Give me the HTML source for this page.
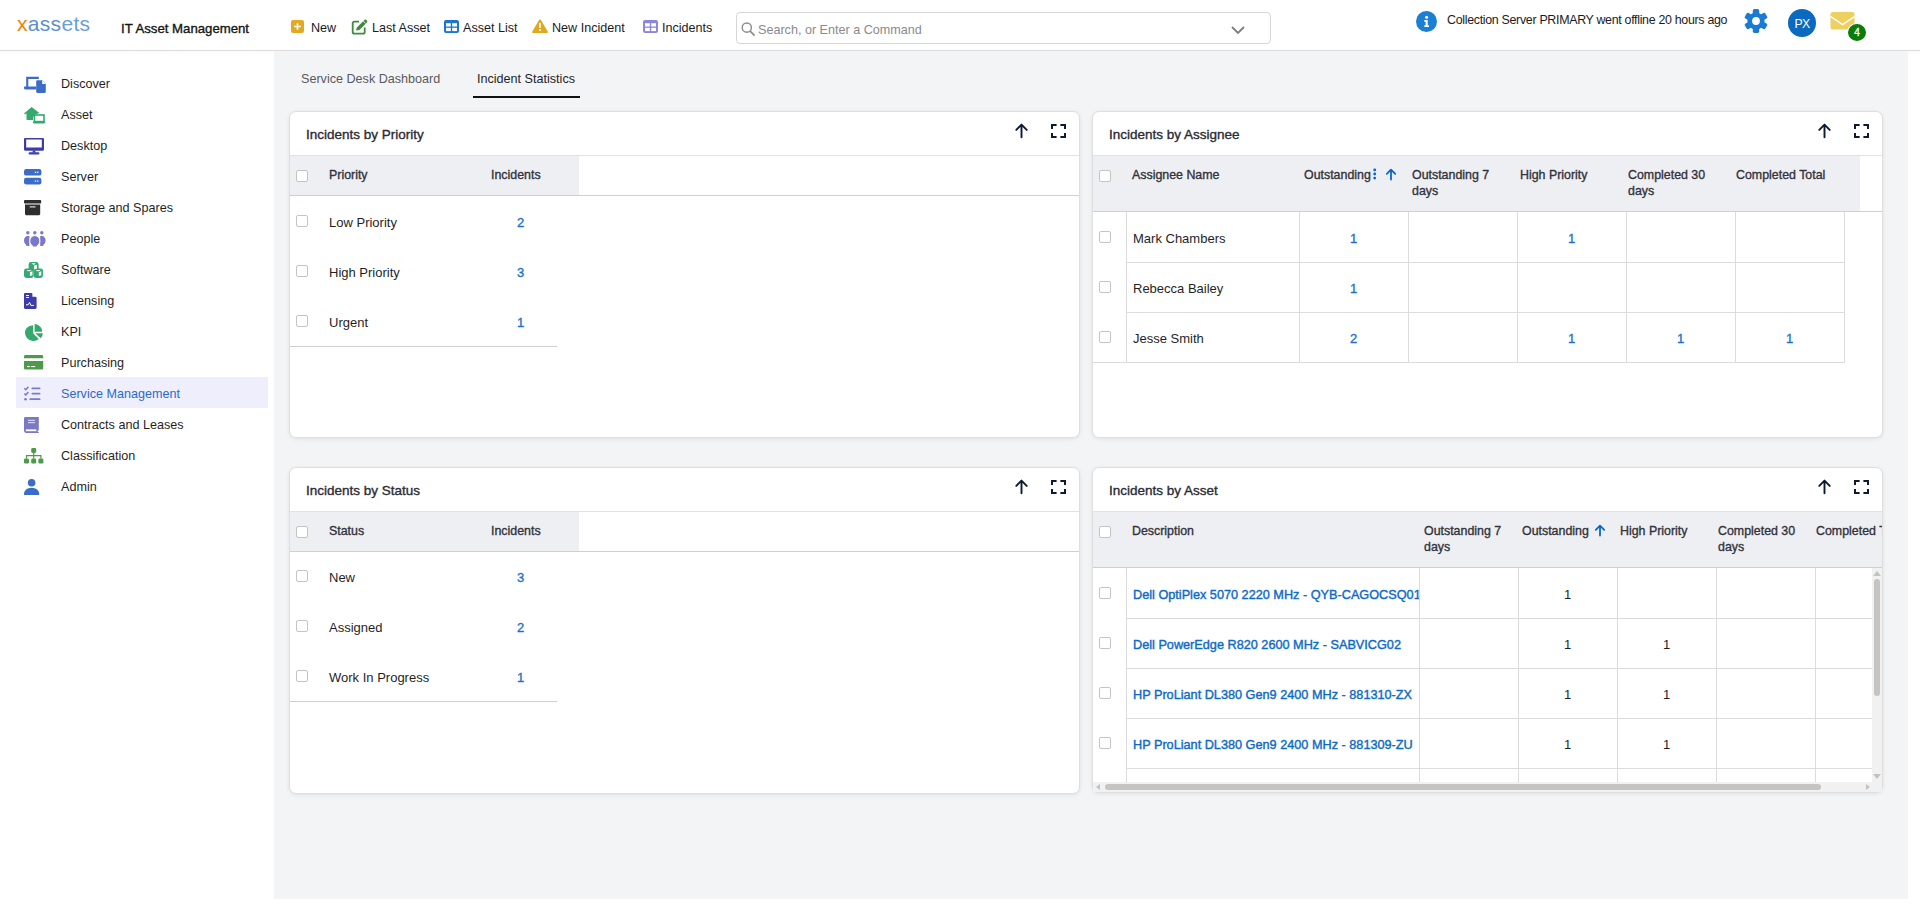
<!DOCTYPE html>
<html><head><meta charset="utf-8">
<style>
*{box-sizing:border-box;margin:0;padding:0}
html,body{width:1920px;height:911px;overflow:hidden;background:#fff;font-family:"Liberation Sans",sans-serif;color:#1f1f1f}
.a{position:absolute}
#hdr{position:absolute;left:0;top:0;width:1920px;height:50px;background:#fff}
#hline{position:absolute;left:0;top:50px;width:1920px;height:1px;background:#dedcdb;box-shadow:0 1px 3px rgba(0,0,0,0.06)}
.logo{position:absolute;left:17px;top:12px;font-size:21px;letter-spacing:0.3px;font-weight:400}
.tb{position:absolute;top:21px;font-size:12.6px;color:#1b1b1b;white-space:nowrap}
.tbi{position:absolute}
#main{position:absolute;left:274px;top:51px;width:1634px;height:848px;background:#f3f4f6}
.nav{position:absolute;left:61px;font-size:12.6px;color:#1f1f1f;white-space:nowrap}
.ico{position:absolute;left:24px}
.panel{position:absolute;background:#fff;border-radius:7px;border:1px solid #dedede;box-shadow:0 1px 4px rgba(0,0,0,0.08)}
.ptitle{position:absolute;left:16px;top:14px;font-size:13.5px;color:#2b2b33;white-space:nowrap;-webkit-text-stroke:0.35px #2b2b33}
.psep{position:absolute;left:0;top:43px;height:1px;background:#e3e3e3;width:100%}
.thbg{position:absolute;left:0;top:44px;background:#eeeff3}
.thline{position:absolute;left:0;height:2px;background:#d9d9d9;width:100%}
.cb{position:absolute;width:12px;height:12px;border:1px solid #c4c4c4;border-radius:2px;background:#fff}
.th{position:absolute;font-size:12.4px;color:#33333b;white-space:nowrap;font-weight:400;-webkit-text-stroke:0.35px #33333b}
.td{position:absolute;font-size:13px;color:#1f1f1f;white-space:nowrap}
.num{position:absolute;font-size:13px;color:#1a73c8;white-space:nowrap;-webkit-text-stroke:0.35px #1a73c8}
.ln{position:absolute;background:#dcdcdc}
.link{position:absolute;font-size:12.7px;color:#0d6ac6;white-space:nowrap;font-weight:400;-webkit-text-stroke:0.4px #0d6ac6}
</style></head><body>
<div id="hdr">
  <div class="logo"><span style="color:#f07f0a">x</span><span style="color:#5a90cc">ass</span><span style="color:#6a9ddc">ets</span></div>
  <div class="tb" style="left:121px;top:21px;font-size:13.2px;font-weight:400;color:#141414;-webkit-text-stroke:0.35px #141414">IT Asset Management</div>

  <div class="tbi" style="left:291px;top:20px;width:13px;height:13px;background:#e2aa22;border-radius:2px"><svg width="13" height="13" viewBox="0 0 13 13" style="position:absolute;left:0;top:0"><path d="M6.5 3.2v6.6M3.2 6.5h6.6" stroke="#fff" stroke-width="1.6"/></svg></div>
  <div class="tb" style="left:311px">New</div>
  <svg class="tbi" style="left:351px;top:18px" width="18" height="17" viewBox="0 0 18 17"><path d="M8 3.7H3.4c-1 0-1.7.7-1.7 1.7v8.6c0 1 .7 1.7 1.7 1.7H12c1 0 1.7-.7 1.7-1.7V9.6" fill="none" stroke="#3f8a3f" stroke-width="1.8"/><path d="M5 12.6l.9-3.2 7.5-7.5c.5-.5 1.3-.5 1.8 0l.7.7c.5.5.5 1.3 0 1.8l-7.5 7.5z" fill="#3f8a3f"/><path d="M12.3 3.1l2.4 2.4" stroke="#fff" stroke-width="0.8"/></svg>
  <div class="tb" style="left:372px">Last Asset</div>
  <svg class="tbi" style="left:444px;top:20px" width="15" height="13" viewBox="0 0 15 13"><rect x="0" y="0" width="15" height="13" rx="2" fill="#1d74d4"/><rect x="2" y="3.2" width="4.8" height="3.3" fill="#fff"/><rect x="8.2" y="3.2" width="4.8" height="3.3" fill="#fff"/><rect x="2" y="7.8" width="4.8" height="3.3" fill="#fff"/><rect x="8.2" y="7.8" width="4.8" height="3.3" fill="#fff"/></svg>
  <div class="tb" style="left:463px">Asset List</div>
  <svg class="tbi" style="left:532px;top:19px" width="16" height="14" viewBox="0 0 16 14"><path d="M8 0.6c.5 0 .9.3 1.1.7l6.6 11.2c.4.7-.1 1.5-.9 1.5H1.2c-.8 0-1.3-.8-.9-1.5L6.9 1.3C7.1.9 7.5.6 8 .6z" fill="#e0a91c"/><rect x="7.1" y="4" width="1.8" height="5" fill="#fff"/><rect x="7.1" y="10.2" width="1.8" height="1.8" fill="#fff"/></svg>
  <div class="tb" style="left:552px">New Incident</div>
  <svg class="tbi" style="left:643px;top:20px" width="15" height="13" viewBox="0 0 15 13"><rect x="0" y="0" width="15" height="13" rx="2" fill="#8d87d8"/><rect x="2" y="3.2" width="4.8" height="3.3" fill="#fff"/><rect x="8.2" y="3.2" width="4.8" height="3.3" fill="#fff"/><rect x="2" y="7.8" width="4.8" height="3.3" fill="#fff"/><rect x="8.2" y="7.8" width="4.8" height="3.3" fill="#fff"/></svg>
  <div class="tb" style="left:662px">Incidents</div>
  <div class="a" style="left:736px;top:12px;width:535px;height:32px;border:1px solid #d6d6d6;border-radius:4px;background:#fff"></div>
  <svg class="tbi" style="left:741px;top:22px" width="15" height="15" viewBox="0 0 15 15"><circle cx="5.8" cy="5.6" r="4.6" fill="none" stroke="#8a8a8a" stroke-width="1.4"/><path d="M9.2 9.2l4.4 4.4" stroke="#8a8a8a" stroke-width="1.7"/></svg>
  <div class="tb" style="left:758px;top:23px;color:#8a8a8a">Search, or Enter a Command</div>
  <svg class="tbi" style="left:1231px;top:26px" width="14" height="9" viewBox="0 0 14 9"><path d="M1 1l6 6 6-6" fill="none" stroke="#7d7d7d" stroke-width="1.8"/></svg>
  <svg class="tbi" style="left:1416px;top:11px" width="21" height="21" viewBox="0 0 21 21"><circle cx="10.5" cy="10.5" r="10.5" fill="#1b7fd4"/><circle cx="10.6" cy="6.2" r="1.5" fill="#fff"/><path d="M8.3 9h3.4v5.2h1.2v1.7H8.3v-1.7h1.3v-3.5H8.3z" fill="#fff"/></svg>
  <div class="tb" style="left:1447px;top:13px;font-size:12.4px;letter-spacing:-0.3px;color:#1b1b1b">Collection Server PRIMARY went offline 20 hours ago</div>
  <svg class="tbi" style="left:1744px;top:9px" width="24" height="24" viewBox="-12 -12 24 24"><g fill="#1a7ad4"><circle r="8.6"/><rect x="-3.2" y="-11.9" width="6.4" height="23.8" rx="1.6"/><rect x="-3.2" y="-11.9" width="6.4" height="23.8" rx="1.6" transform="rotate(60)"/><rect x="-3.2" y="-11.9" width="6.4" height="23.8" rx="1.6" transform="rotate(120)"/></g><circle r="3.9" fill="#fff"/></svg>
  <div class="a" style="left:1788px;top:9px;width:28px;height:28px;border-radius:50%;background:#0a6abf;color:#fff;font-size:12.2px;line-height:31px;text-align:center;letter-spacing:-0.6px">PX</div>
  <svg class="tbi" style="left:1830px;top:12px" width="25" height="18" viewBox="0 0 25 18"><rect x="0.5" y="0" width="24" height="17.6" rx="2.2" fill="#edd060"/><path d="M0.8 4.6l11.8 8 11.8-8" fill="none" stroke="#fff" stroke-width="1.3"/></svg>
  <div class="a" style="left:1847px;top:23px;width:20px;height:19px;border-radius:50%;background:#0b7d0b;border:1px solid #fff;color:#fff;font-size:10px;line-height:18px;text-align:center;-webkit-text-stroke:0.3px #fff">4</div>
</div>
<div id="hline"></div>
<div class="a" style="left:16px;top:377px;width:252px;height:31px;background:#eeeefc"></div>
<div class="nav" style="top:77px;color:#1f1f1f">Discover</div>
<svg class="ico" style="left:24px;top:76px" width="22" height="17" viewBox="0 0 22 17"><path d="M2.2 0.8h12.6v2.2H4.3v9.2H2.2z" fill="#3a6cc8"/><path d="M0 11.2c0-.4.3-.6.6-.6h11.4v2.8H1.2C.5 13.4 0 12.8 0 12.1z" fill="#3a6cc8"/><path d="M12.2 5.5c0-.7.5-1.2 1.2-1.2h4.8l3.6 3.6v7.8c0 .7-.5 1.2-1.2 1.2h-7.2c-.7 0-1.2-.5-1.2-1.2z" fill="#3a6cc8"/><path d="M18.2 4.3v3.6h3.6" fill="#fff"/></svg>
<div class="nav" style="top:108px;color:#1f1f1f">Asset</div>
<svg class="ico" style="left:24px;top:107px" width="22" height="17" viewBox="0 0 22 17"><path d="M7.6 0L0 6.6l.9 1 1.6-1.3V12c0 .6.4 1 1 1H9V9.5h2.2V7.5L15.4 6 7.6 0z" fill="#35a86e"/><rect x="10.4" y="8" width="9.6" height="6.6" fill="none" stroke="#35a86e" stroke-width="1.6"/><path d="M8.8 14.6h12.6c0 1.2-.6 1.9-1.5 1.9H10.3c-.9 0-1.5-.7-1.5-1.9z" fill="#35a86e"/></svg>
<div class="nav" style="top:139px;color:#1f1f1f">Desktop</div>
<svg class="ico" style="left:24px;top:138px" width="20" height="17" viewBox="0 0 20 17"><path d="M1.2 0h17.6c.7 0 1.2.5 1.2 1.2v10.4c0 .7-.5 1.2-1.2 1.2H1.2C.5 12.8 0 12.3 0 11.6V1.2C0 .5.5 0 1.2 0z M2.2 1.6v7.8h15.6V1.6z" fill="#3d3ca8" fill-rule="evenodd"/><rect x="8.6" y="12.6" width="2.8" height="2" fill="#3d3ca8"/><rect x="4.6" y="14.3" width="10.8" height="2.2" rx="1" fill="#3d3ca8"/></svg>
<div class="nav" style="top:170px;color:#1f1f1f">Server</div>
<svg class="ico" style="left:24px;top:169px" width="18" height="16" viewBox="0 0 18 16"><rect x="0" y="0" width="17.4" height="6.6" rx="2.2" fill="#3a6cc8"/><rect x="0" y="8.8" width="17.4" height="6.6" rx="2.2" fill="#3a6cc8"/><rect x="10.8" y="2.7" width="1.4" height="1.2" fill="#fff"/><rect x="13" y="2.7" width="1.4" height="1.2" fill="#fff"/><rect x="10.8" y="11.5" width="1.4" height="1.2" fill="#fff"/><rect x="13" y="11.5" width="1.4" height="1.2" fill="#fff"/></svg>
<div class="nav" style="top:201px;color:#1f1f1f">Storage and Spares</div>
<svg class="ico" style="left:24px;top:200px" width="18" height="16" viewBox="0 0 18 16"><rect x="0" y="0" width="17.2" height="3.4" rx="1" fill="#2e2e2e"/><path d="M1 4.6h15.2v9.2c0 .9-.7 1.5-1.5 1.5H2.5c-.9 0-1.5-.6-1.5-1.5z" fill="#2e2e2e"/><rect x="5.6" y="6.2" width="6" height="1.4" rx=".6" fill="#d8d8d8"/></svg>
<div class="nav" style="top:232px;color:#1f1f1f">People</div>
<svg class="ico" style="left:24px;top:231px" width="22" height="16" viewBox="0 0 22 16"><g fill="#7b78c8"><circle cx="3.8" cy="1.8" r="1.7"/><circle cx="10.8" cy="1.8" r="1.7"/><circle cx="17.8" cy="1.8" r="1.7"/><path d="M3.8 5C1.6 5 0 7 0 9.6c0 2.2 1.2 3.8 2.4 4.6v.9h3V5.1z"/><path d="M17.8 5c2.2 0 3.8 2 3.8 4.6 0 2.2-1.2 3.8-2.4 4.6v.9h-3V5.1z"/><path d="M10.8 4.6c2.9 0 5 2.4 5 5.3 0 2.4-1.3 4.2-2.8 5v1.1H8.6v-1.1c-1.5-.8-2.8-2.6-2.8-5 0-2.9 2.1-5.3 5-5.3z" stroke="#fff" stroke-width="1"/></g></svg>
<div class="nav" style="top:263px;color:#1f1f1f">Software</div>
<svg class="ico" style="left:24px;top:262px" width="20" height="16" viewBox="0 0 20 16"><g fill="#35a874"><rect x="4.6" y="0" width="10" height="8.6" rx="2.4"/><rect x="0" y="6.4" width="9.6" height="9.6" rx="2.4"/><rect x="9.6" y="6.4" width="9.4" height="9.6" rx="2.4"/></g><g fill="#fff"><path d="M7.5 1.3h4.3L9.65 2.9z"/><path d="M10.1 3.6l2.8-.9v4l-2.8 .9z"/><ellipse cx="5" cy="8.6" rx="2.3" ry="0.65"/><path d="M5.9 10.2l2.5-.9v3.9l-2.5.9z"/><ellipse cx="14.1" cy="8.6" rx="2.3" ry="0.65"/><path d="M14.8 10.2l2.5-.9v3.9l-2.5.9z"/></g></svg>
<div class="nav" style="top:294px;color:#1f1f1f">Licensing</div>
<svg class="ico" style="left:24px;top:293px" width="13" height="16" viewBox="0 0 13 16"><path d="M1.2 0h6.8L12.6 4.4v10.4c0 .7-.5 1.2-1.2 1.2H1.2C.5 16 0 15.5 0 14.8V1.2C0 .5.5 0 1.2 0z" fill="#3d3ca8"/><path d="M8.4 0v3.8h4.2" fill="#fff"/><rect x="2" y="2" width="3" height="1" fill="#fff"/><rect x="2" y="4" width="3" height="1" fill="#fff"/><path d="M2 11.8h2.2l1.3-2.4 1.4 3h3" fill="none" stroke="#fff" stroke-width="1"/></svg>
<div class="nav" style="top:325px;color:#1f1f1f">KPI</div>
<svg class="ico" style="left:25px;top:324px" width="18" height="17" viewBox="0 0 18 17"><path d="M8.2 1.2v8.2l5.6 5.6c-1.4 1.2-3.3 1.9-5.3 1.9C3.8 16.9 0 13.1 0 8.5 0 4.5 3.6 1.4 8.2 1.2z" fill="#35a86e"/><path d="M9.6 0v7.8h7.6C17.2 3.6 13.8.2 9.6 0z" fill="#35a86e"/><path d="M10.4 9.2h7.4c-.1 2-.9 3.8-2.2 5.1z" fill="#35a86e"/></svg>
<div class="nav" style="top:356px;color:#1f1f1f">Purchasing</div>
<svg class="ico" style="left:24px;top:355px" width="20" height="15" viewBox="0 0 20 15"><path d="M1.6 0h16c.9 0 1.6.7 1.6 1.6v1.7H0V1.6C0 .7.7 0 1.6 0z" fill="#4e9a4a"/><path d="M0 5.9h19.2v7.1c0 .9-.7 1.6-1.6 1.6h-16C.7 14.6 0 13.9 0 13z" fill="#4e9a4a"/><rect x="3" y="11" width="2.8" height="1.1" fill="#fff"/><rect x="7.2" y="11" width="4" height="1.1" fill="#fff"/></svg>
<div class="nav" style="top:387px;color:#2f6acb">Service Management</div>
<svg class="ico" style="left:24px;top:386px" width="17" height="15" viewBox="0 0 17 15"><path d="M0.4 2.4l1.4 1.3 2.6-3" fill="none" stroke="#7b78d0" stroke-width="1.5"/><path d="M0.4 7.6l1.4 1.3 2.6-3" fill="none" stroke="#7b78d0" stroke-width="1.5"/><circle cx="1.5" cy="13.2" r="1.3" fill="#7b78d0"/><rect x="7.5" y="1.5" width="9" height="1.8" rx=".9" fill="#7b78d0"/><rect x="7.5" y="6.7" width="9" height="1.8" rx=".9" fill="#7b78d0"/><rect x="5.4" y="12.3" width="11.1" height="1.8" rx=".9" fill="#7b78d0"/></svg>
<div class="nav" style="top:418px;color:#1f1f1f">Contracts and Leases</div>
<svg class="ico" style="left:24px;top:417px" width="15" height="16" viewBox="0 0 15 16"><path d="M1.4 0h13.4v13.4h-1v1.6h1V16H2.2C1 16 0 15 0 13.8V1.4C0 .6.6 0 1.4 0z" fill="#7b78c8"/><rect x="1.8" y="12.4" width="10.6" height="1.8" fill="#fff"/><rect x="4" y="2.8" width="7" height="1.2" fill="#d6d5f0"/><rect x="4" y="5" width="7" height="1.2" fill="#d6d5f0"/></svg>
<div class="nav" style="top:449px;color:#1f1f1f">Classification</div>
<svg class="ico" style="left:24px;top:448px" width="20" height="16" viewBox="0 0 20 16"><rect x="7.2" y="0" width="5" height="5" rx="1.4" fill="#4e9a4a"/><rect x="0" y="10.6" width="5" height="5" rx="1.4" fill="#4e9a4a"/><rect x="7.2" y="10.6" width="5" height="5" rx="1.4" fill="#4e9a4a"/><rect x="14.4" y="10.6" width="5" height="5" rx="1.4" fill="#4e9a4a"/><path d="M9.7 5v5.6 M2.5 10.6V7.6h14.4v3" fill="none" stroke="#4e9a4a" stroke-width="1.2"/></svg>
<div class="nav" style="top:480px;color:#1f1f1f">Admin</div>
<svg class="ico" style="left:24px;top:479px" width="16" height="16" viewBox="0 0 16 16"><circle cx="7.6" cy="3.8" r="3.8" fill="#3a6cc8"/><path d="M7.6 8.8c4.4 0 7.6 2.8 7.6 6.2v1H0v-1C0 11.6 3.2 8.8 7.6 8.8z" fill="#3a6cc8"/></svg>
<div id="main"></div>
<!--PANELS-->
<div class="a" style="left:301px;top:72px;font-size:12.6px;color:#5a5a5a;white-space:nowrap">Service Desk Dashboard</div>
<div class="a" style="left:477px;top:72px;font-size:12.6px;color:#1f1f1f;white-space:nowrap">Incident Statistics</div>
<div class="a" style="left:473px;top:96px;width:107px;height:2px;background:#111"></div>
<div class="panel" style="left:289px;top:111px;width:791px;height:327px"></div>
<div class="ptitle" style="left:306px;top:127px">Incidents by Priority</div>
<svg class="a" style="left:1014px;top:123px" width="14" height="16" viewBox="0 0 14 16"><path d="M7.5 14.2V1.6M2.3 6.9L7.5 1.6 12.7 6.9" fill="none" stroke="#0d1a30" stroke-width="1.9" stroke-linecap="round" stroke-linejoin="round"/></svg>
<svg class="a" style="left:1051px;top:124px" width="15" height="14" viewBox="0 0 15 14"><path d="M1 5V1h4.6M9.4 1H14v4M14 9v4H9.4M5.6 13H1V9" fill="none" stroke="#0d1a30" stroke-width="2"/></svg>
<div class="ln" style="left:290px;top:155px;width:789px;height:1px;background:#e2e2e2"></div>
<div class="a" style="left:290px;top:156px;width:289px;height:39px;background:#eeeff3"></div>
<div class="ln" style="left:290px;top:195px;width:789px;height:1px;background:#cfcfcf"></div>
<div class="cb" style="left:296px;top:170px"></div>
<div class="th" style="left:329px;top:168px">Priority</div>
<div class="th" style="left:491px;top:168px">Incidents</div>
<div class="cb" style="left:296px;top:215px"></div>
<div class="td" style="left:329px;top:215px">Low Priority</div>
<div class="num" style="left:517px;top:215px">2</div>
<div class="cb" style="left:296px;top:265px"></div>
<div class="td" style="left:329px;top:265px">High Priority</div>
<div class="num" style="left:517px;top:265px">3</div>
<div class="cb" style="left:296px;top:315px"></div>
<div class="td" style="left:329px;top:315px">Urgent</div>
<div class="num" style="left:517px;top:315px">1</div>
<div class="ln" style="left:290px;top:346px;width:267px;height:1px;background:#cfcfcf"></div>
<div class="panel" style="left:289px;top:467px;width:791px;height:327px"></div>
<div class="ptitle" style="left:306px;top:483px">Incidents by Status</div>
<svg class="a" style="left:1014px;top:479px" width="14" height="16" viewBox="0 0 14 16"><path d="M7.5 14.2V1.6M2.3 6.9L7.5 1.6 12.7 6.9" fill="none" stroke="#0d1a30" stroke-width="1.9" stroke-linecap="round" stroke-linejoin="round"/></svg>
<svg class="a" style="left:1051px;top:480px" width="15" height="14" viewBox="0 0 15 14"><path d="M1 5V1h4.6M9.4 1H14v4M14 9v4H9.4M5.6 13H1V9" fill="none" stroke="#0d1a30" stroke-width="2"/></svg>
<div class="ln" style="left:290px;top:511px;width:789px;height:1px;background:#e2e2e2"></div>
<div class="a" style="left:290px;top:512px;width:289px;height:39px;background:#eeeff3"></div>
<div class="ln" style="left:290px;top:551px;width:789px;height:1px;background:#cfcfcf"></div>
<div class="cb" style="left:296px;top:526px"></div>
<div class="th" style="left:329px;top:524px">Status</div>
<div class="th" style="left:491px;top:524px">Incidents</div>
<div class="cb" style="left:296px;top:570px"></div>
<div class="td" style="left:329px;top:570px">New</div>
<div class="num" style="left:517px;top:570px">3</div>
<div class="cb" style="left:296px;top:620px"></div>
<div class="td" style="left:329px;top:620px">Assigned</div>
<div class="num" style="left:517px;top:620px">2</div>
<div class="cb" style="left:296px;top:670px"></div>
<div class="td" style="left:329px;top:670px">Work In Progress</div>
<div class="num" style="left:517px;top:670px">1</div>
<div class="ln" style="left:290px;top:701px;width:267px;height:1px;background:#cfcfcf"></div>
<div class="panel" style="left:1092px;top:111px;width:791px;height:327px"></div>
<div class="ptitle" style="left:1109px;top:127px">Incidents by Assignee</div>
<svg class="a" style="left:1817px;top:123px" width="14" height="16" viewBox="0 0 14 16"><path d="M7.5 14.2V1.6M2.3 6.9L7.5 1.6 12.7 6.9" fill="none" stroke="#0d1a30" stroke-width="1.9" stroke-linecap="round" stroke-linejoin="round"/></svg>
<svg class="a" style="left:1854px;top:124px" width="15" height="14" viewBox="0 0 15 14"><path d="M1 5V1h4.6M9.4 1H14v4M14 9v4H9.4M5.6 13H1V9" fill="none" stroke="#0d1a30" stroke-width="2"/></svg>
<div class="ln" style="left:1093px;top:155px;width:789px;height:1px;background:#e2e2e2"></div>
<div class="a" style="left:1093px;top:156px;width:767px;height:55px;background:#eeeff3"></div>
<div class="ln" style="left:1093px;top:211px;width:789px;height:1px;background:#cfcfcf"></div>
<div class="cb" style="left:1099px;top:170px"></div>
<div class="th" style="left:1132px;top:167px;line-height:16px">Assignee Name</div>
<div class="th" style="left:1304px;top:167px;line-height:16px">Outstanding</div>
<div class="th" style="left:1412px;top:167px;line-height:16px">Outstanding 7<br>days</div>
<div class="th" style="left:1520px;top:167px;line-height:16px">High Priority</div>
<div class="th" style="left:1628px;top:167px;line-height:16px">Completed 30<br>days</div>
<div class="th" style="left:1736px;top:167px;line-height:16px">Completed Total</div>
<svg class="a" style="left:1372px;top:168px" width="6" height="12" viewBox="0 0 6 12"><g fill="#0a66cc"><circle cx="2.7" cy="1.9" r="1.45"/><circle cx="2.7" cy="6" r="1.45"/><circle cx="2.7" cy="10.1" r="1.45"/></g></svg>
<svg class="a" style="left:1385px;top:168px" width="12" height="13" viewBox="0 0 12 13"><path d="M6 11.6V1.6M1.8 5.8L6 1.6 10.2 5.8" fill="none" stroke="#0a66cc" stroke-width="1.8" stroke-linecap="round" stroke-linejoin="round"/></svg>
<div class="ln" style="left:1126px;top:212px;width:1px;height:150px"></div>
<div class="ln" style="left:1299px;top:212px;width:1px;height:150px"></div>
<div class="ln" style="left:1408px;top:212px;width:1px;height:150px"></div>
<div class="ln" style="left:1517px;top:212px;width:1px;height:150px"></div>
<div class="ln" style="left:1626px;top:212px;width:1px;height:150px"></div>
<div class="ln" style="left:1735px;top:212px;width:1px;height:150px"></div>
<div class="ln" style="left:1844px;top:212px;width:1px;height:150px"></div>
<div class="ln" style="left:1126px;top:262px;width:719px;height:1px"></div>
<div class="ln" style="left:1126px;top:312px;width:719px;height:1px"></div>
<div class="ln" style="left:1093px;top:362px;width:752px;height:1px"></div>
<div class="cb" style="left:1099px;top:231px"></div>
<div class="td" style="left:1133px;top:231px">Mark Chambers</div>
<div class="num" style="left:1299px;width:109px;text-align:center;top:231px">1</div>
<div class="num" style="left:1517px;width:109px;text-align:center;top:231px">1</div>
<div class="cb" style="left:1099px;top:281px"></div>
<div class="td" style="left:1133px;top:281px">Rebecca Bailey</div>
<div class="num" style="left:1299px;width:109px;text-align:center;top:281px">1</div>
<div class="cb" style="left:1099px;top:331px"></div>
<div class="td" style="left:1133px;top:331px">Jesse Smith</div>
<div class="num" style="left:1299px;width:109px;text-align:center;top:331px">2</div>
<div class="num" style="left:1517px;width:109px;text-align:center;top:331px">1</div>
<div class="num" style="left:1626px;width:109px;text-align:center;top:331px">1</div>
<div class="num" style="left:1735px;width:109px;text-align:center;top:331px">1</div>
<div class="panel" style="left:1092px;top:467px;width:791px;height:326px"></div>
<div class="ptitle" style="left:1109px;top:483px">Incidents by Asset</div>
<svg class="a" style="left:1817px;top:479px" width="14" height="16" viewBox="0 0 14 16"><path d="M7.5 14.2V1.6M2.3 6.9L7.5 1.6 12.7 6.9" fill="none" stroke="#0d1a30" stroke-width="1.9" stroke-linecap="round" stroke-linejoin="round"/></svg>
<svg class="a" style="left:1854px;top:480px" width="15" height="14" viewBox="0 0 15 14"><path d="M1 5V1h4.6M9.4 1H14v4M14 9v4H9.4M5.6 13H1V9" fill="none" stroke="#0d1a30" stroke-width="2"/></svg>
<div class="ln" style="left:1093px;top:511px;width:789px;height:1px;background:#e2e2e2"></div>
<div class="a" style="left:1093px;top:512px;width:789px;height:55px;background:#eeeff3;overflow:hidden"><div class="th" style="left:723px;top:11px;line-height:16px">Completed Total</div></div>
<div class="ln" style="left:1093px;top:567px;width:789px;height:1px;background:#cfcfcf"></div>
<div class="cb" style="left:1099px;top:526px"></div>
<div class="th" style="left:1132px;top:523px;line-height:16px">Description</div>
<div class="th" style="left:1424px;top:523px;line-height:16px">Outstanding 7<br>days</div>
<div class="th" style="left:1522px;top:523px;line-height:16px">Outstanding</div>
<div class="th" style="left:1620px;top:523px;line-height:16px">High Priority</div>
<div class="th" style="left:1718px;top:523px;line-height:16px">Completed 30<br>days</div>
<svg class="a" style="left:1594px;top:524px" width="12" height="13" viewBox="0 0 12 13"><path d="M6 11.6V1.6M1.8 5.8L6 1.6 10.2 5.8" fill="none" stroke="#0a66cc" stroke-width="1.8" stroke-linecap="round" stroke-linejoin="round"/></svg>
<div class="a" style="left:1093px;top:568px;width:779px;height:214px;overflow:hidden;background:#fff"><div class="ln" style="left:33px;top:0px;width:1px;height:220px"></div><div class="ln" style="left:326px;top:0px;width:1px;height:220px"></div><div class="ln" style="left:425px;top:0px;width:1px;height:220px"></div><div class="ln" style="left:524px;top:0px;width:1px;height:220px"></div><div class="ln" style="left:623px;top:0px;width:1px;height:220px"></div><div class="ln" style="left:722px;top:0px;width:1px;height:220px"></div><div class="ln" style="left:33px;top:50px;width:760px;height:1px"></div><div class="ln" style="left:33px;top:100px;width:760px;height:1px"></div><div class="ln" style="left:33px;top:150px;width:760px;height:1px"></div><div class="ln" style="left:33px;top:200px;width:760px;height:1px"></div><div class="cb" style="left:6px;top:19px"></div><div class="a" style="left:33px;top:0px;width:293px;height:50px;overflow:hidden"><div class="link" style="left:7px;top:20px">Dell OptiPlex 5070 2220 MHz - QYB-CAGOCSQ01</div></div><div class="td" style="left:425px;width:99px;text-align:center;top:19px">1</div><div class="cb" style="left:6px;top:69px"></div><div class="a" style="left:33px;top:50px;width:293px;height:50px;overflow:hidden"><div class="link" style="left:7px;top:20px">Dell PowerEdge R820 2600 MHz - SABVICG02</div></div><div class="td" style="left:425px;width:99px;text-align:center;top:69px">1</div><div class="td" style="left:524px;width:99px;text-align:center;top:69px">1</div><div class="cb" style="left:6px;top:119px"></div><div class="a" style="left:33px;top:100px;width:293px;height:50px;overflow:hidden"><div class="link" style="left:7px;top:20px">HP ProLiant DL380 Gen9 2400 MHz - 881310-ZX</div></div><div class="td" style="left:425px;width:99px;text-align:center;top:119px">1</div><div class="td" style="left:524px;width:99px;text-align:center;top:119px">1</div><div class="cb" style="left:6px;top:169px"></div><div class="a" style="left:33px;top:150px;width:293px;height:50px;overflow:hidden"><div class="link" style="left:7px;top:20px">HP ProLiant DL380 Gen9 2400 MHz - 881309-ZU</div></div><div class="td" style="left:425px;width:99px;text-align:center;top:169px">1</div><div class="td" style="left:524px;width:99px;text-align:center;top:169px">1</div></div>
<div class="a" style="left:1872px;top:568px;width:10px;height:214px;background:#f1f1f1"></div>
<div class="a" style="left:1874px;top:579px;width:6px;height:117px;border-radius:3px;background:#c5c4c2"></div>
<svg class="a" style="left:1873px;top:571px" width="8" height="5" viewBox="0 0 8 5"><path d="M0 5L4 0 8 5z" fill="#c2c2c2"/></svg>
<svg class="a" style="left:1873px;top:774px" width="8" height="5" viewBox="0 0 8 5"><path d="M0 0L4 5 8 0z" fill="#c2c2c2"/></svg>
<div class="a" style="left:1093px;top:782px;width:789px;height:10px;background:#f1f1f1"></div>
<div class="a" style="left:1105px;top:784px;width:716px;height:6px;border-radius:3px;background:#c5c4c2"></div>
<svg class="a" style="left:1096px;top:784px" width="4" height="6" viewBox="0 0 4 6"><path d="M4 0L0 3 4 6z" fill="#c2c2c2"/></svg>
<svg class="a" style="left:1866px;top:784px" width="4" height="6" viewBox="0 0 4 6"><path d="M0 0L4 3 0 6z" fill="#c2c2c2"/></svg>
<!--/PANELS-->
</body></html>
